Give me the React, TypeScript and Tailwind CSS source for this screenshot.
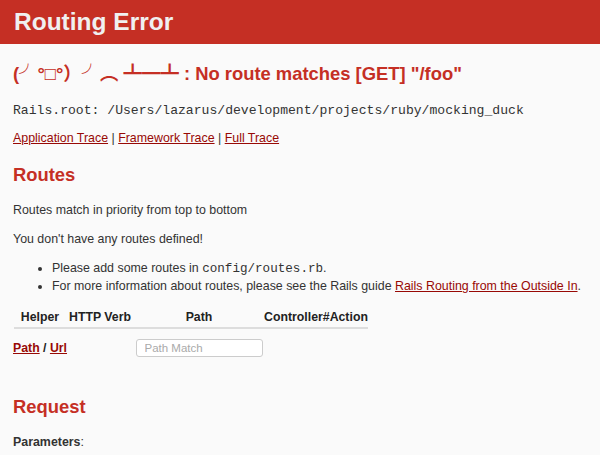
import React from 'react';

const sans = "font-['Liberation_Sans','Noto_Sans_CJK_JP',sans-serif]";
const mono = "font-['Liberation_Mono',monospace]";

const App: React.FC = () => {
  return (
    <div className={`min-h-screen bg-[#fafafa] text-[#333] ${sans}`}>
      <header className="h-[44px] flex items-center pl-[14px] bg-[#C52F24] text-[#F0F0F0]">
        <h1 className="text-[24.5px] font-bold leading-[44px]">Routing Error</h1>
      </header>

      <div className="px-[13px]">
        <h2 className="mt-[18px] text-[18.4px] leading-[24px] font-bold text-[#C52F24] whitespace-nowrap">
          (╯°□°）╯︵ ┻━┻ : No route matches [GET] "/foo"
        </h2>

        <p className={`mt-[16px] text-[13.1px] leading-[17px] whitespace-nowrap ${mono}`}>
          Rails.root: /Users/lazarus/development/projects/ruby/mocking_duck
        </p>

        <p className="mt-[11px] text-[12.4px] leading-[17px]">
          <a href="#" className="text-[#980905] underline">Application Trace</a> |{' '}
          <a href="#" className="text-[#980905] underline">Framework Trace</a> |{' '}
          <a href="#" className="text-[#980905] underline">Full Trace</a>
        </p>

        <h2 className="mt-[16px] text-[18.4px] leading-[24px] font-bold text-[#C52F24]">Routes</h2>

        <p className="mt-[15px] text-[12.4px] leading-[17px]">Routes match in priority from top to bottom</p>
        <p className="mt-[12px] text-[12.4px] leading-[17px]">You don't have any routes defined!</p>

        <ul className="mt-[12px] list-disc pl-[39px] text-[12.4px] leading-[17px]">
          <li>
            Please add some routes in <code className={`text-[12.6px] ${mono}`}>config/routes.rb</code>.
          </li>
          <li>
            For more information about routes, please see the Rails guide{' '}
            <a href="#" className="text-[#980905] underline">Rails Routing from the Outside In</a>.
          </li>
        </ul>

        <div className="mt-[14px] ml-px w-[354px] text-[12.3px] leading-[17px] font-bold text-[#222]">
          <div className="grid grid-cols-[52px_68px_130px_104px] pb-px border-b-2 border-[#ddd] text-center">
            <div>Helper</div>
            <div className="whitespace-nowrap">HTTP Verb</div>
            <div>Path</div>
            <div className="whitespace-nowrap">Controller#Action</div>
          </div>
          <div className="grid grid-cols-[52px_68px_130px_104px] items-center pt-[10px]">
            <div className="whitespace-nowrap -ml-px">
              <a href="#" className="text-[#980905] underline">Path</a> /{' '}
              <a href="#" className="text-[#980905] underline">Url</a>
            </div>
            <div />
            <input
              type="text"
              placeholder="Path Match"
              className="justify-self-center w-[127px] h-[18px] px-[8px] bg-white border border-[#ccc] rounded-[3px] text-[11.5px] font-normal placeholder:text-[#aaa] outline-none"
            />
            <div />
          </div>
        </div>

        <h2 className="mt-[38px] text-[18.4px] leading-[24px] font-bold text-[#C52F24]">Request</h2>

        <p className="mt-[15px] text-[12.4px] leading-[17px]">
          <b>Parameters</b>:
        </p>
      </div>
    </div>
  );
};

export default App;
